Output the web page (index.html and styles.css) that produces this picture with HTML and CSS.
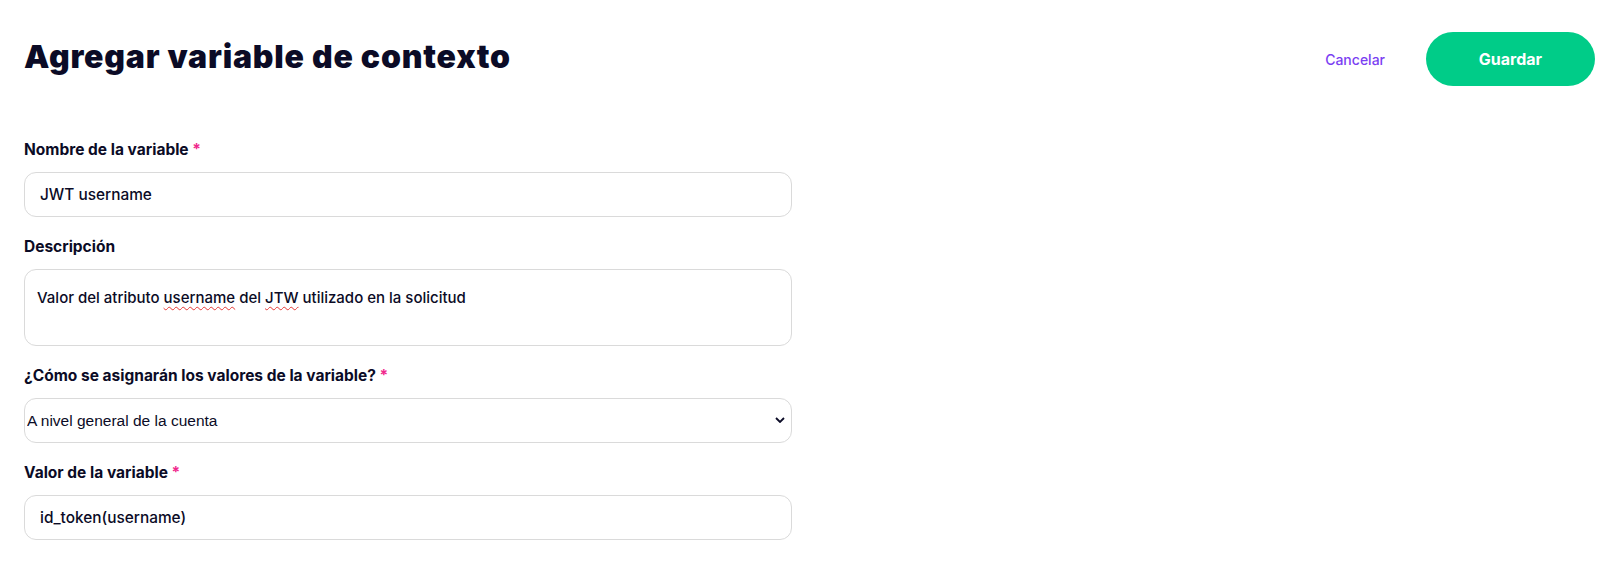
FILE: index.html
```html
<!DOCTYPE html>
<html lang="es">

<head>
  <meta charset="UTF-8">
  <meta name="viewport" content="width=device-width, initial-scale=1.0">
  <title>Agregar variable de contexto</title>
  <link rel="stylesheet" href="styles.css">
</head>

<body>
  <header class="top-bar">
    <h1 class="title">Agregar variable de contexto</h1>
    <div class="actions">
      <button class="btn-link" type="button">Cancelar</button>
      <button class="btn-save" type="button">Guardar</button>
    </div>
  </header>

  <form class="form">
    <div class="field">
      <label class="label" for="name">Nombre de la variable <span class="req">*</span></label>
      <input class="input" id="name" type="text" value="JWT username">
    </div>

    <div class="field">
      <label class="label">Descripción</label>
      <div class="textarea" role="textbox">Valor del atributo <span class="typo">username</span> del <span class="typo">JTW</span> utilizado en la solicitud</div>
    </div>

    <div class="field">
      <label class="label" for="scope">¿Cómo se asignarán los valores de la variable? <span class="req">*</span></label>
      <div class="select-wrap">
        <select class="select" id="scope">
          <option>A nivel general de la cuenta</option>
        </select>
        <svg class="chevron" width="10" height="6" viewBox="0 0 10 6">
          <path d="M1 1l4 4 4-4" fill="none" stroke="#0b0b26" stroke-width="1.8" />
        </svg>
      </div>
    </div>

    <div class="field">
      <label class="label" for="value">Valor de la variable <span class="req">*</span></label>
      <input class="input" id="value" type="text" value="id_token(username)">
    </div>
  </form>
</body>

</html>
```

FILE: styles.css
```css
* {
  margin: 0;
  padding: 0;
  box-sizing: border-box;
  font-family: 'Inter', 'Liberation Sans', sans-serif;
}

body {
  background: #ffffff;
  color: #0b0b26;
  padding: 0 8px 0 24px;
}

.top-bar {
  display: flex;
  justify-content: space-between;
  align-items: center;
  padding-top: 32px;
}

.title {
  font-size: 32px;
  font-weight: 900;
  line-height: 1;
  letter-spacing: 0.8px;
  margin-top: -4px;
}

.actions {
  display: flex;
  align-items: center;
  gap: 41px;
}

.btn-link {
  border: none;
  background: none;
  color: #7b3ff2;
  font-size: 14px;
  font-weight: 500;
  cursor: pointer;
}

.btn-save {
  width: 169px;
  height: 54px;
  border: none;
  border-radius: 27px;
  background: #00cc88;
  color: white;
  font-size: 16px;
  font-weight: 700;
  cursor: pointer;
}

.form {
  width: 768px;
  margin-top: 54px;
  display: flex;
  flex-direction: column;
  gap: 20px;
}

.field {
  display: flex;
  flex-direction: column;
}

.label {
  font-size: 15.5px;
  font-weight: 700;
  line-height: 20px;
  margin-bottom: 12px;
}

.req {
  color: #f0288c;
}

.input {
  height: 45px;
  border: 1px solid #dadada;
  border-radius: 12px;
  padding: 0 15px;
  font-size: 15.4px;
  font-weight: 500;
  color: #0b0b26;
  outline: none;
}

.textarea {
  height: 77px;
  border: 1px solid #dadada;
  border-radius: 12px;
  padding: 16px 12px;
  font-size: 15px;
  line-height: 24px;
  font-weight: 500;
}

.typo {
  text-decoration: underline wavy #e53935;
  text-decoration-thickness: 1px;
  text-underline-offset: 3px;
}

.select-wrap {
  position: relative;
}

.select {
  width: 100%;
  height: 45px;
  border: 1px solid #dadada;
  border-radius: 12px;
  padding: 0 2px;
  font-family: 'Liberation Sans', sans-serif;
  font-size: 15.5px;
  color: #0b0b26;
  background: #ffffff;
  appearance: none;
  outline: none;
}

.chevron {
  position: absolute;
  right: 7px;
  top: 19px;
}
```
